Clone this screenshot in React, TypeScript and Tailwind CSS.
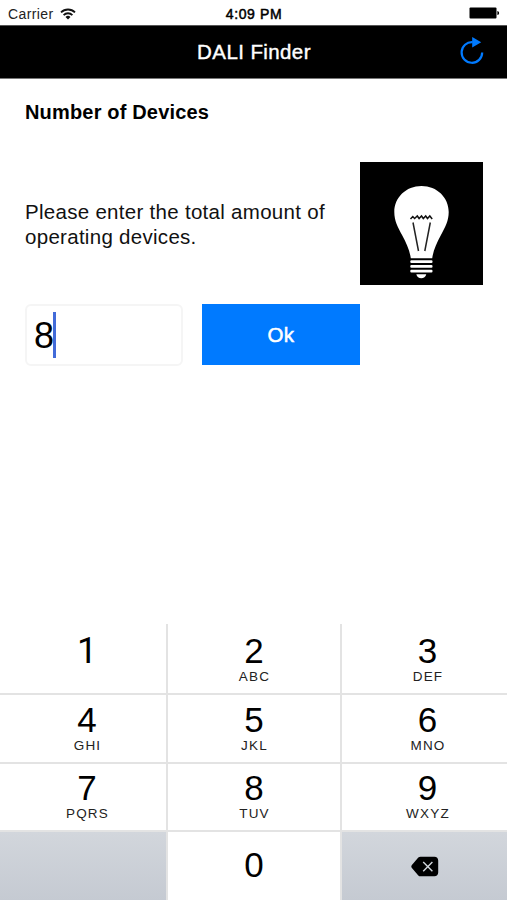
import { useState } from "react";

type Key = { digit: string; letters?: string };

const ROWS: Key[][] = [
  [{ digit: "1" }, { digit: "2", letters: "ABC" }, { digit: "3", letters: "DEF" }],
  [
    { digit: "4", letters: "GHI" },
    { digit: "5", letters: "JKL" },
    { digit: "6", letters: "MNO" },
  ],
  [
    { digit: "7", letters: "PQRS" },
    { digit: "8", letters: "TUV" },
    { digit: "9", letters: "WXYZ" },
  ],
];

function WifiIcon() {
  return (
    <svg width="16" height="12" viewBox="0 0 16 12" fill="none" stroke="#111" strokeWidth="1.8">
      <path d="M1 4.4a9.9 9.9 0 0 1 14 0" />
      <path d="M3.6 7.1a6.2 6.2 0 0 1 8.8 0" />
      <path d="M8 11.6 5.5 9.1a3.5 3.5 0 0 1 5 0Z" fill="#111" stroke="none" />
    </svg>
  );
}

function BatteryIcon() {
  return (
    <svg width="31" height="12" viewBox="0 0 31 12">
      <rect x="0.5" y="0.5" width="27" height="11" rx="1" fill="#000" />
      <path d="M28.4 4v4c1 0 1.7-1 1.7-2s-.7-2-1.7-2Z" fill="#000" />
    </svg>
  );
}

function ReloadIcon() {
  return (
    <svg width="24" height="28" viewBox="0 0 24 28">
      <path d="M22.2 15.5A10.3 10.3 0 1 1 12.6 5.2" fill="none" stroke="#007aff" strokeWidth="2.2" />
      <path d="M12.2 0v10.6l9-5.3Z" fill="#007aff" />
    </svg>
  );
}

function Bulb() {
  return (
    <svg width="123" height="123" viewBox="0 0 123 123" className="block bg-black">
      <path
        d="M61.5 24C46 24 34.3 35.5 34.3 50c0 9 3.5 15 8 23.5 4 7.5 7.5 15 8.5 22.8h21.4c1-7.8 4.5-15.3 8.5-22.8 4.5-8.5 8-14.5 8-23.5C88.7 35.5 77 24 61.5 24Z"
        fill="#fff"
      />
      <path
        d="M50.5 57l2.3-2.5 1.8 2 2.7-2.5 1.8 2.5 2.4-2.5 1.8 2.5 2.4-2.5 1.8 2.5 2.3-2.5 2.4 3"
        fill="none"
        stroke="#111"
        strokeWidth="1.5"
      />
      <path d="M53 60.5 58.5 89M70.3 60.5 64.8 89" stroke="#222" strokeWidth="1.5" />
      <g fill="#fff">
        <rect x="50.3" y="98.3" width="22.2" height="2.8" rx="1" />
        <rect x="50.3" y="103" width="22.2" height="2.8" rx="1" />
        <rect x="50.3" y="107.7" width="22.2" height="2.8" rx="1" />
        <path d="M56.3 112.3h10c-.6 2.5-2.6 4-5 4s-4.4-1.5-5-4Z" />
      </g>
    </svg>
  );
}

function DeleteIcon() {
  return (
    <svg width="28" height="21" viewBox="0 0 28 21">
      <path
        d="M9.5.7H23.5c2.2 0 3.7 1.5 3.7 3.7v12.2c0 2.2-1.5 3.7-3.7 3.7H9.5c-.9 0-1.5-.3-2.2-.9L.9 12c-.8-.9-.8-2.1 0-3L7.3 1.6c.7-.6 1.3-.9 2.2-.9Z"
        fill="#000"
      />
      <path d="m12.2 5.9 9.2 9.4m0-9.4-9.2 9.4" stroke="#d0d5db" strokeWidth="1.4" />
    </svg>
  );
}

function KeyButton({ digit, letters, onPress }: Key & { onPress: (digit: string) => void }) {
  return (
    <button
      type="button"
      onClick={() => onPress(digit)}
      className="flex flex-col items-center justify-end bg-white first:pl-[8px] last:pl-[6px]"
    >
      <span
        className={
          digit === "1"
            ? "font-[Roboto,sans-serif] text-[36px] leading-[36px]"
            : "text-[35px] leading-[36px]"
        }
      >
        {digit}
      </span>
      <span className="h-[16px] pl-[1px] text-[13.5px] leading-[16px] tracking-[1.2px] text-[#222]">
        {letters}
      </span>
    </button>
  );
}

export default function App() {
  const [value, setValue] = useState("8");

  const press = (digit: string) => setValue((v) => v + digit);

  return (
    <div className="flex h-[900px] w-[507px] flex-col overflow-hidden bg-white font-['Liberation_Sans',Arial,sans-serif] text-black">
      {/* Status bar */}
      <div className="grid h-[25px] shrink-0 grid-cols-3 items-center pr-[7px] pl-[8px]">
        <div className="flex items-center gap-[6px] pt-[2px] text-[14px] leading-4 tracking-[0.4px] text-[#222]">
          Carrier
          <WifiIcon />
        </div>
        <div className="pt-[2px] text-center text-[14px] leading-4 tracking-[0.6px] [-webkit-text-stroke:0.5px_#000]">
          4:09 PM
        </div>
        <div className="flex justify-end pt-px">
          <BatteryIcon />
        </div>
      </div>

      {/* Navigation bar */}
      <header className="grid h-[54px] shrink-0 grid-cols-[1fr_auto_1fr] items-center border-y border-t-[#555] border-b-[#777] bg-black px-[23px]">
        <span />
        <h1 className="pl-px text-[20.5px] leading-6 tracking-[0.4px] text-white [-webkit-text-stroke:0.4px_#fff]">
          DALI Finder
        </h1>
        <button type="button" aria-label="Reload" className="mb-[2px] justify-self-end">
          <ReloadIcon />
        </button>
      </header>

      <main className="flex flex-1 flex-col pt-[21px] pr-[24px] pl-[25px]">
        <h2 className="text-[20px] leading-6 font-bold tracking-[0.17px]">Number of Devices</h2>

        <div className="mt-[38px] flex items-center justify-between">
          <p className="w-[320px] text-[20.5px] leading-[25px] tracking-[0.29px] text-[#111]">
            Please enter the total amount of operating devices.
          </p>
          <Bulb />
        </div>

        <div className="mt-[19px] flex gap-[19px]">
          <div className="flex h-[62px] w-[158px] items-center rounded-md border-2 border-[#f5f5f5] pt-px pl-[7px]">
            <span className="text-[36px] leading-10">{value}</span>
            <span className="-mt-px -ml-px h-[46px] w-[2.5px] bg-[#426bd9]" />
          </div>
          <button
            type="button"
            className="h-[61px] w-[158px] bg-[#007aff] pt-px text-[20.5px] tracking-[0.4px] text-white [-webkit-text-stroke:0.5px_#fff]"
          >
            Ok
          </button>
        </div>
      </main>

      {/* Number pad */}
      <div className="grid h-[276px] shrink-0 grid-cols-[166px_172px_165px] grid-rows-[69px_67px_66px_68px] gap-[2px] bg-[#e3e3e3]">
        {ROWS.map((row, i) => (
          <div key={i} className="col-span-3 grid grid-cols-subgrid *:pb-[8px]">
            {row.map((key) => (
              <KeyButton key={key.digit} {...key} onPress={press} />
            ))}
          </div>
        ))}
        <div className="bg-linear-to-b from-[#d2d6dc] to-[#c5cad2]" />
        <button
          type="button"
          onClick={() => press("0")}
          className="flex items-center justify-center bg-white pb-[2px] text-[35px] leading-9"
        >
          0
        </button>
        <button
          type="button"
          aria-label="Delete"
          onClick={() => setValue((v) => v.slice(0, -1))}
          className="flex items-center justify-center bg-linear-to-b from-[#d2d6dc] to-[#c5cad2] pl-px"
        >
          <DeleteIcon />
        </button>
      </div>
    </div>
  );
}
